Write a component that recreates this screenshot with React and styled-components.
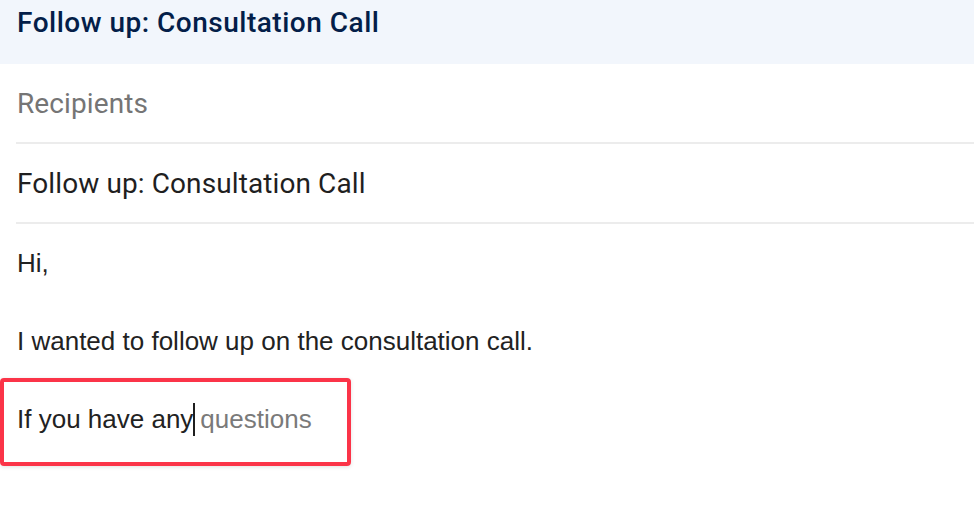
import React from 'react';
import styled, { createGlobalStyle } from 'styled-components';

const GlobalStyle = createGlobalStyle`
  html, body {
    margin: 0;
    padding: 0;
    background: #ffffff;
  }
  body {
    font-family: "Liberation Sans", Arial, sans-serif;
  }
`;

const Page = styled.div`
  width: 974px;
  height: 506px;
  overflow: hidden;
  background: #ffffff;
`;

const Header = styled.div`
  height: 64px;
  background: #f2f6fc;
  padding-left: 17px;
  box-sizing: border-box;
`;

const HeaderTitle = styled.h1`
  margin: 0;
  font-family: "Roboto", "Open Sans", sans-serif;
  font-weight: 500;
  font-size: 28px;
  letter-spacing: 0.5px;
  line-height: 46px;
  color: #041e49;
`;

const Field = styled.div`
  margin-left: 16px;
  height: 78px;
  display: flex;
  align-items: center;
  border-bottom: 2px solid #ececec;
  font-family: "Roboto", "Open Sans", sans-serif;
  font-size: 28px;
  letter-spacing: 0.1px;
  color: ${(p) => (p.$muted ? '#757575' : '#1f1f1f')};
  padding-left: 1px;
`;

const Body = styled.div`
  padding-left: 17px;
  font-family: "Liberation Sans", Arial, sans-serif;
  font-size: 26px;
  color: #222222;
`;

const Line = styled.div`
  position: relative;
  line-height: 78px;
  height: 78px;
  white-space: nowrap;
`;

const Highlight = styled.span`
  position: absolute;
  left: -17px;
  top: -2px;
  width: 351px;
  height: 88px;
  box-sizing: border-box;
  border: 4px solid #fb3448;
  border-radius: 4px;
  box-shadow: 0 1px 4px rgba(0, 0, 0, 0.12);
  pointer-events: none;
`;

const Caret = styled.span`
  display: inline-block;
  width: 2px;
  height: 33px;
  background: #1f1f1f;
  vertical-align: -8px;
`;

const Suggestion = styled.span`
  color: #7a7a7a;
  margin-left: 5px;
`;

export default function App() {
  return (
    <Page>
      <GlobalStyle />
      <Header>
        <HeaderTitle>Follow up: Consultation Call</HeaderTitle>
      </Header>
      <Field $muted>Recipients</Field>
      <Field>Follow up: Consultation Call</Field>
      <Body>
        <Line>Hi,</Line>
        <Line>I wanted to follow up on the consultation call.</Line>
        <Line>
          If you have any<Caret />
          <Suggestion>questions</Suggestion>
          <Highlight />
        </Line>
      </Body>
    </Page>
  );
}
